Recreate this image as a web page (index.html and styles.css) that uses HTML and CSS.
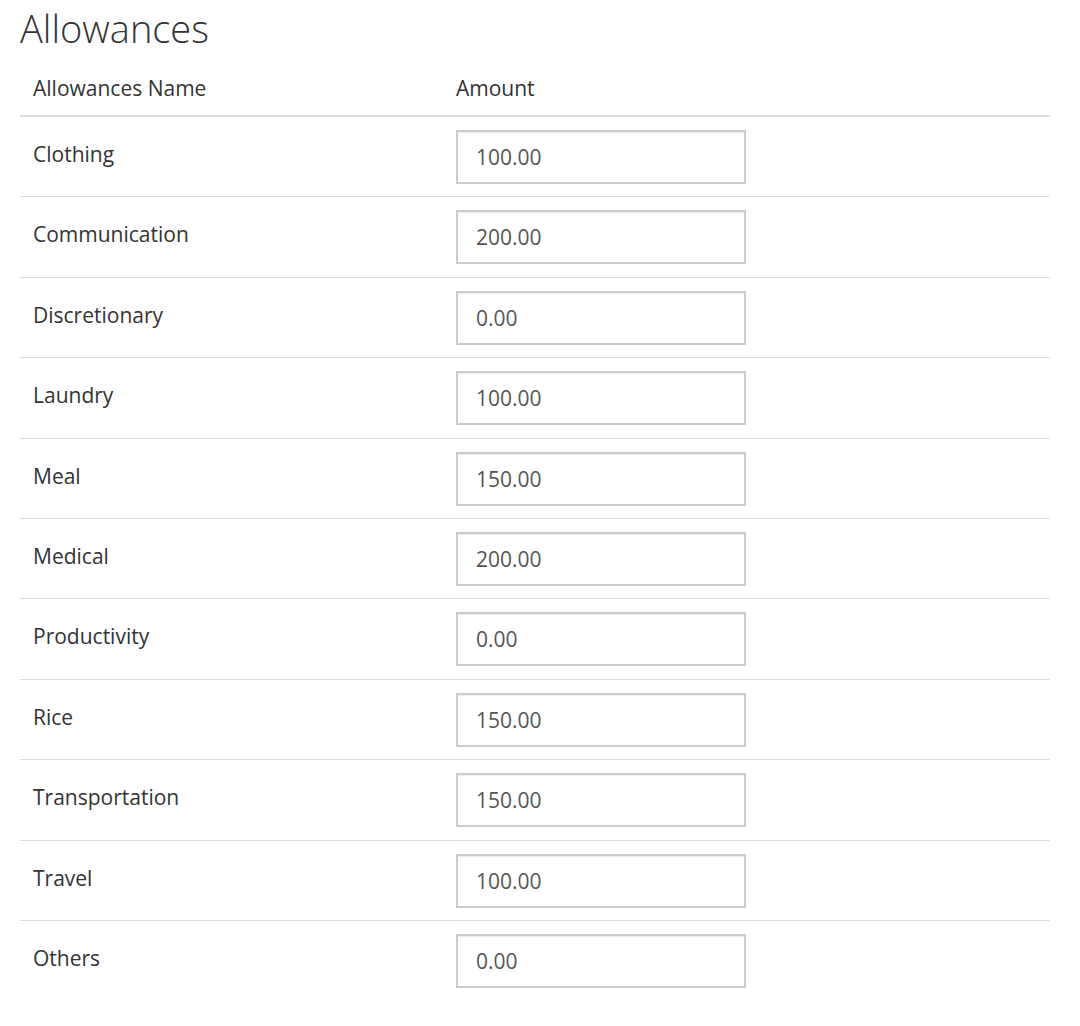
FILE: index.html
```html
<!DOCTYPE html>
<html lang="en">
<head>
    <meta charset="UTF-8">
    <title>Allowances</title>
    <link rel="stylesheet" href="styles.css">
</head>
<body>
    <h2 class="title">Allowances</h2>
    <table class="allowances">
        <thead>
            <tr><th class="name-col">Allowances Name</th><th>Amount</th></tr>
        </thead>
        <tbody>
            <tr><td class="label">Clothing</td><td><input class="amount" type="text" value="100.00"></td></tr>
            <tr><td class="label">Communication</td><td><input class="amount" type="text" value="200.00"></td></tr>
            <tr><td class="label">Discretionary</td><td><input class="amount" type="text" value="0.00"></td></tr>
            <tr><td class="label">Laundry</td><td><input class="amount" type="text" value="100.00"></td></tr>
            <tr><td class="label">Meal</td><td><input class="amount" type="text" value="150.00"></td></tr>
            <tr><td class="label">Medical</td><td><input class="amount" type="text" value="200.00"></td></tr>
            <tr><td class="label">Productivity</td><td><input class="amount" type="text" value="0.00"></td></tr>
            <tr><td class="label">Rice</td><td><input class="amount" type="text" value="150.00"></td></tr>
            <tr><td class="label">Transportation</td><td><input class="amount" type="text" value="150.00"></td></tr>
            <tr><td class="label">Travel</td><td><input class="amount" type="text" value="100.00"></td></tr>
            <tr><td class="label">Others</td><td><input class="amount" type="text" value="0.00"></td></tr>
        </tbody>
    </table>
</body>
</html>
```

FILE: styles.css
```css
body {
    margin: 0;
    padding: 0 30px 0 20px;
    font-family: "Open Sans", Arial, sans-serif;
    color: #333;
    background: #fff;
}

.title {
    font-size: 38px;
    font-weight: 300;
    margin: 0 0 10px;
    padding-top: 4px;
    line-height: 48px;
    color: #333;
}

.allowances {
    width: 100%;
    border-collapse: collapse;
    font-size: 21px;
}

.allowances th {
    text-align: left;
    font-weight: 400;
    padding: 12px 13px 13px;
    line-height: 28px;
    border-bottom: 2px solid #ddd;
}

.allowances .name-col {
    width: 397px;
}

.allowances td {
    padding: 13px 13px 12.4px;
    border-top: 1px solid #ddd;
    vertical-align: middle;
}

.allowances td.label {
    padding-top: 10px;
    padding-bottom: 15.4px;
}

.allowances tbody tr:first-child td {
    border-top: 0;
}

.amount {
    box-sizing: border-box;
    width: 290px;
    height: 54px;
    padding: 6px 18px;
    font-family: inherit;
    font-size: 21px;
    color: #555;
    border: 2px solid #ccc;
    border-radius: 0;
    box-shadow: inset 0 1px 1px rgba(0, 0, 0, 0.075);
}
```
